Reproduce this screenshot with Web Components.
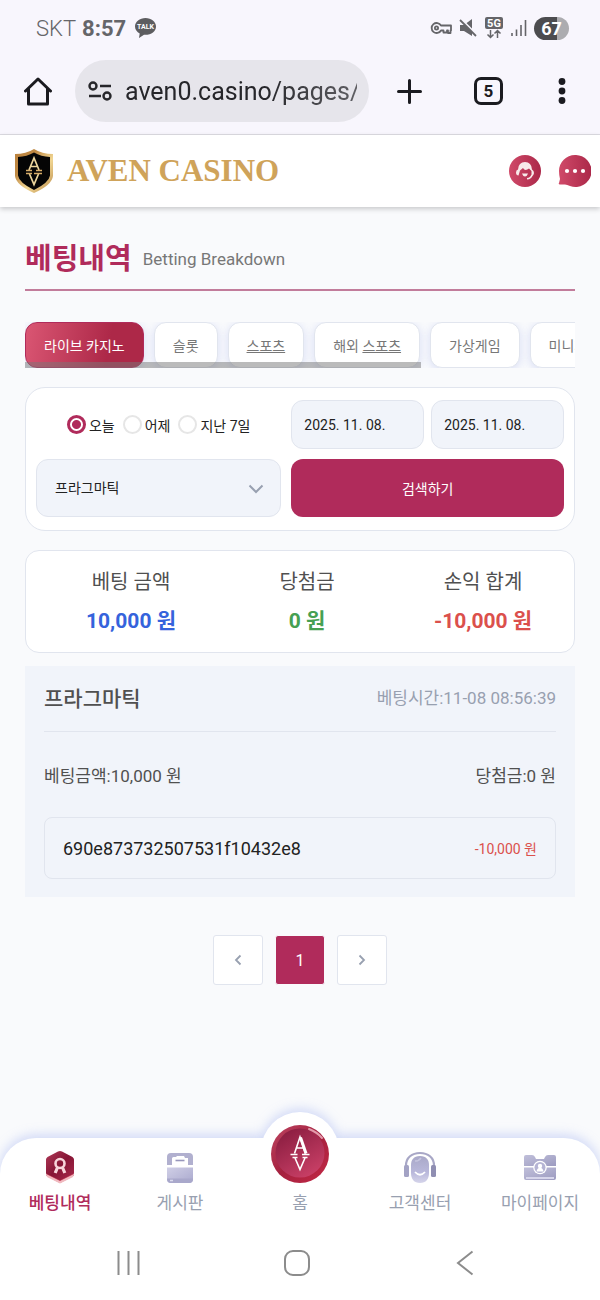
<!DOCTYPE html>
<html lang="ko">
<head>
    <meta charset="UTF-8">
    <meta name="viewport" content="width=device-width, initial-scale=1.0">
    <title>AVEN CASINO</title>
    <style>
        :root {
            --brand: #b02b5b;
            --line: #e1e5ee;
            --field: #f1f4fa;
            --muted: #98a0b0;
            --text: #505050;
        }
        body {
            margin: 0;
            min-height: 100vh;
            display: flex;
            flex-direction: column;
            background: #f9fafc;
            color: var(--text);
            font-family: Roboto, "Noto Sans CJK KR", sans-serif;
        }
        main {
            flex: 1;
            padding: 0 25px;
        }
    </style>
</head>
<body>
    <status-bar></status-bar>
    <browser-bar url="aven0.casino/pages/" tabs="5"></browser-bar>
    <site-header></site-header>

    <main>
        <page-heading heading="베팅내역">Betting Breakdown</page-heading>

        <tab-strip>
            <tab-item active>라이브 카지노</tab-item>
            <tab-item>슬롯</tab-item>
            <tab-item><u>스포츠</u></tab-item>
            <tab-item>해외 <u>스포츠</u></tab-item>
            <tab-item>가상게임</tab-item>
            <tab-item>미니게임</tab-item>
        </tab-strip>

        <bet-filter></bet-filter>

        <summary-card>
            <summary-item label="베팅 금액" color="#3563dc">10,000 원</summary-item>
            <summary-item label="당첨금" color="#46a052">0 원</summary-item>
            <summary-item label="손익 합계" color="#db504c">-10,000 원</summary-item>
        </summary-card>

        <bet-record
            game="프라그마틱"
            time="11-08 08:56:39"
            amount="10,000 원"
            win="0 원"
            code="690e873732507531f10432e8"
            result="-10,000 원"></bet-record>

        <page-numbers></page-numbers>
    </main>

    <bottom-nav>
        <nav-item label="베팅내역" active>
            <svg width="32" height="34" viewBox="0 0 32 34">
                <defs>
                    <linearGradient id="hex" x1="0" y1="0" x2="1" y2="1">
                        <stop offset="0" stop-color="#b03a58"/>
                        <stop offset=".5" stop-color="#861535"/>
                        <stop offset="1" stop-color="#a92a4b"/>
                    </linearGradient>
                </defs>
                <path d="M16 5L29.500 12V26L16 33L2.500 26V12Z" fill="#d04a60"/>
                <path d="M3 27L16 33.500 29 27V24.500L16 31 3 24.500Z" fill="#f0b9bf"/>
                <path d="M16 1Q17 1 18 1.600L28.500 7Q30 8 30 9.500V23.500L16 30.500 2 23.500V9.500Q2 8 3.500 7L14 1.600Q15 1 16 1Z" fill="url(#hex)"/>
                <circle cx="16" cy="13.500" r="4.500" fill="none" stroke="#f7d5da" stroke-width="2.600"/>
                <path d="M13.500 17.500L11.200 23M18.500 17.500L20.800 23" stroke="#f7d5da" stroke-width="3.200"/>
            </svg>
        </nav-item>
        <nav-item label="게시판">
            <svg width="32" height="34" viewBox="0 0 32 34">
                <defs>
                    <linearGradient id="board" x1="0" y1="0" x2="1" y2="1">
                        <stop offset="0" stop-color="#d0cfe6"/>
                        <stop offset="1" stop-color="#aaa9ce"/>
                    </linearGradient>
                </defs>
                <path d="M3 7Q3 3 7 3H25Q29 3 29 7V15H3Z" fill="#b1b0cf"/>
                <path d="M8 15V8.500Q8 7 9.500 7H12L13 6H20L21 8H24V15Z" fill="#fff"/>
                <path d="M11.500 10.500H20.500" stroke="#9796bb" stroke-width="1.600"/>
                <path d="M3 17.500H29V29Q29 33 25 33H7Q3 33 3 29Z" fill="url(#board)"/>
                <path d="M3 28.500V29Q3 33 7 33H25Q29 33 29 29V28.500Z" fill="#a9a8cb"/>
                <path d="M6 30.500H9" stroke="#dcdcee" stroke-width="1.500"/>
            </svg>
        </nav-item>
        <nav-item label="홈" home></nav-item>
        <nav-item label="고객센터">
            <svg width="34" height="34" viewBox="0 0 34 34">
                <defs>
                    <linearGradient id="face" x1="0" y1="0" x2="0" y2="1">
                        <stop offset="0" stop-color="#a9a8c8"/>
                        <stop offset=".6" stop-color="#b9b8db"/>
                        <stop offset="1" stop-color="#d5d4ea"/>
                    </linearGradient>
                </defs>
                <path d="M3 18V15.500C3 7.500 9 3 17 3S31 7.500 31 15.500V18" fill="none" stroke="#a8a7c6" stroke-width="2.200"/>
                <rect x="1" y="15" width="5" height="12" rx="1.500" fill="#a3a2c4"/>
                <rect x="28" y="15" width="5" height="12" rx="1.500" fill="#8f8eb2"/>
                <path d="M17 6C10.500 6 8 10 8 15V23C8 29 11 33 17 33S26 29 26 23V15C26 10 23.500 6 17 6Z" fill="url(#face)"/>
                <path d="M12 11Q16 11 18 8" fill="none" stroke="#c5c4de" stroke-width="1.500"/>
                <path d="M12 22Q17 27.500 22 22" fill="none" stroke="#fff" stroke-width="1.800"/>
            </svg>
        </nav-item>
        <nav-item label="마이페이지">
            <svg width="34" height="34" viewBox="0 0 34 34">
                <defs>
                    <linearGradient id="wallet" x1="0" y1="0" x2="1" y2="1">
                        <stop offset="0" stop-color="#c0bfda"/>
                        <stop offset="1" stop-color="#9c9bc0"/>
                    </linearGradient>
                </defs>
                <path d="M1 7Q1 5 3 5H9Q11 5 12 7L13 9H21L22 7Q23 5 25 5H31Q33 5 33 7V16H1Z" fill="url(#wallet)"/>
                <path d="M1 17.500H33V28Q33 30 31 30H3Q1 30 1 28Z" fill="url(#wallet)"/>
                <path d="M3 28H31" stroke="#d7d6eb" stroke-width="2"/>
                <circle cx="17" cy="17.500" r="6.800" fill="#fff"/>
                <circle cx="17" cy="17.500" r="5.500" fill="#b5b4d4"/>
                <path d="M13.500 21.500Q14 18 17 17.500Q20 18 20.500 21.500Z" fill="#fff"/>
                <circle cx="17" cy="16" r="2.200" fill="#fff"/>
            </svg>
        </nav-item>
    </bottom-nav>
    <system-nav></system-nav>

    <script>
        class StatusBar extends HTMLElement {
            constructor() {
                super();
                const shadow = this.attachShadow({ mode: 'open' });
                shadow.innerHTML = `
                    <style>
                        :host {
                            display: flex;
                            align-items: center;
                            justify-content: space-between;
                            height: 56px;
                            padding: 0 31px 0 36px;
                            background: #f8f6fd;
                            color: #656569;
                            font-size: 22px;
                        }
                        div { display: flex; align-items: center; gap: 6px; }
                        .icons { gap: 7px; }
                        .carrier { font-weight: 300; }
                        .clock { font-weight: 700; }
                        .clock + svg { margin-left: 3px; }
                        .battery {
                            width: 35px;
                            line-height: 23px;
                            border-radius: 12px;
                            background: linear-gradient(90deg, #4c4c4f 66%, #acacb0 66%);
                            color: #fff;
                            font-size: 18px;
                            font-weight: 700;
                            text-align: center;
                        }
                    </style>
                    <div>
                        <span class="carrier">SKT</span>
                        <span class="clock">8:57</span>
                        <svg width="21" height="20" viewBox="0 0 21 20">
                            <path d="M10.500 0C4.700 0 0 3.800 0 8.500c0 3 2 5.600 4.700 7.100L4 20l5-3.200c7 .5 12-3.300 12-8.300C21 3.800 16.300 0 10.500 0z" fill="#5d5d60"/>
                            <text x="10.500" y="11" fill="#fff" font-size="7" font-weight="700" text-anchor="middle">TALK</text>
                        </svg>
                    </div>
                    <div class="icons">
                        <svg width="22" height="14" viewBox="0 0 22 14" fill="none" stroke="#656569" stroke-width="1.800">
                            <path d="M11 4.500A5 5 0 1 0 11 9.500H13.500V11.500H17V9.500H18V12H20.500V9.500H21V4.500Z" stroke-linejoin="round"/>
                            <circle cx="6.500" cy="7" r="1.600"/>
                        </svg>
                        <svg width="18" height="18" viewBox="0 0 18 18">
                            <path d="M1 6H5L13 0V17L5 12H1Z" fill="#656569"/>
                            <path d="M2 0L18 16" stroke="#f8f6fd" stroke-width="2"/>
                            <path d="M1 1L17 17" stroke="#656569" stroke-width="1.800"/>
                        </svg>
                        <svg width="20" height="22" viewBox="0 0 20 22">
                            <rect x="1" y="0" width="18" height="12" rx="2" fill="#656569"/>
                            <text x="10" y="10" fill="#fff" font-size="11" font-weight="700" text-anchor="middle">5G</text>
                            <path d="M6.500 13V20M3.500 17.500L6.500 20.500 9.500 17.500M13.500 21V14M10.500 16.500L13.500 13.500 16.500 16.500" fill="none" stroke="#656569" stroke-width="1.500"/>
                        </svg>
                        <svg width="16" height="16" viewBox="0 0 16 16" stroke="#656569" stroke-width="1.600">
                            <path d="M1 13V16M5.500 9.500V16M10 5V16M14.500 0V16"/>
                        </svg>
                        <span class="battery">67</span>
                    </div>
                `;
            }
        }
        customElements.define('status-bar', StatusBar);

        class BrowserBar extends HTMLElement {
            constructor() {
                super();
                const shadow = this.attachShadow({ mode: 'open' });
                shadow.innerHTML = `
                    <style>
                        :host {
                            display: flex;
                            align-items: center;
                            padding: 4px 34px 12px 24px;
                            background: #f8f6fd;
                            border-bottom: 1px solid #dddce3;
                        }
                        button {
                            display: flex;
                            padding: 0;
                            border: 0;
                            background: none;
                            color: #1b1b20;
                            font: 700 17px Roboto, sans-serif;
                        }
                        .address {
                            flex: 1;
                            min-width: 0;
                            display: flex;
                            align-items: center;
                            gap: 12px;
                            height: 62px;
                            margin: 0 28px 0 23px;
                            padding: 0 12px 0 13px;
                            box-sizing: border-box;
                            border-radius: 31px;
                            background: #e6e5eb;
                        }
                        svg { flex: none; }
                        input {
                            flex: 1;
                            min-width: 0;
                            padding: 0;
                            border: 0;
                            background: none;
                            color: #26262a;
                            font: 25px Roboto, sans-serif;
                            -webkit-mask-image: linear-gradient(90deg, #000 60%, rgba(0, 0, 0, .7));
                        }
                        .tabs {
                            align-items: center;
                            justify-content: center;
                            width: 29px;
                            height: 28px;
                            margin: 0 55px 0 52px;
                            border: 3px solid #1b1b20;
                            border-radius: 7px;
                        }
                    </style>
                    <button aria-label="홈">
                        <svg width="28" height="29" viewBox="0 0 28 29" fill="none" stroke="#1b1b20" stroke-width="3" stroke-linejoin="round" stroke-linecap="round">
                            <path d="M1.500 14L14 2 26.500 14M4.500 11.500V27H23.500V11.500"/>
                        </svg>
                    </button>
                    <div class="address">
                        <svg width="25" height="20" viewBox="0 0 25 20" fill="none" stroke="#26262a" stroke-width="2.400">
                            <circle cx="5" cy="5" r="3.500"/>
                            <path d="M12 5H23M1 15H13"/>
                            <circle cx="19" cy="15" r="3.500"/>
                        </svg>
                        <input type="text" aria-label="주소" value="${this.getAttribute('url')}">
                    </div>
                    <button aria-label="새 탭">
                        <svg width="25" height="25" viewBox="0 0 25 25" stroke="#1b1b20" stroke-width="3" stroke-linecap="round">
                            <path d="M12.500 1.500V23.500M1.500 12.500H23.500"/>
                        </svg>
                    </button>
                    <button class="tabs" aria-label="탭">${this.getAttribute('tabs')}</button>
                    <button aria-label="메뉴">
                        <svg width="8" height="28" viewBox="0 0 8 28" fill="#1b1b20">
                            <circle cx="4" cy="4.500" r="3.400"/>
                            <circle cx="4" cy="14" r="3.400"/>
                            <circle cx="4" cy="23.500" r="3.400"/>
                        </svg>
                    </button>
                `;
            }
        }
        customElements.define('browser-bar', BrowserBar);

        class SiteHeader extends HTMLElement {
            constructor() {
                super();
                const shadow = this.attachShadow({ mode: 'open' });
                shadow.innerHTML = `
                    <style>
                        :host {
                            display: flex;
                            align-items: center;
                            justify-content: space-between;
                            height: 72px;
                            padding: 0 9px 0 14px;
                            background: #fff;
                            box-shadow: 0 2px 5px rgba(0, 0, 0, .2);
                        }
                        .logo {
                            display: flex;
                            align-items: center;
                            gap: 13px;
                            color: #cfa35a;
                            font: 700 31px "Liberation Serif", serif;
                            text-decoration: none;
                            white-space: nowrap;
                        }
                        .actions { display: flex; gap: 17px; }
                        button { display: flex; padding: 0; border: 0; background: none; }
                    </style>
                    <a class="logo" href="#">
                        <svg width="40" height="46" viewBox="0 0 40 46">
                            <defs>
                                <linearGradient id="gold" x1="0" y1="0" x2="1" y2="1">
                                    <stop offset="0" stop-color="#b9803c"/>
                                    <stop offset=".3" stop-color="#c08a44"/>
                                    <stop offset=".6" stop-color="#f1d693"/>
                                    <stop offset="1" stop-color="#b98a48"/>
                                </linearGradient>
                            </defs>
                            <path d="M20 1Q28 6 39 6V28Q38 37 20 45Q2 37 1 28V6Q12 6 20 1Z" fill="url(#gold)"/>
                            <path d="M20 4.500Q27 8.500 36 9V27.500Q35 34.500 20 42Q5 34.500 4 27.500V9Q13 8.500 20 4.500Z" fill="#050505"/>
                            <path d="M15 22L20 10 25 22M17 18.500H23M15.500 26L20 36.500 24.500 26" fill="none" stroke="#ecd59c" stroke-width="1.700"/>
                            <path d="M12 22.500H18M22 22.500H28M12 25.500H18M20 25.500H28" stroke="#d7ac68" stroke-width="1.300"/>
                        </svg>
                        AVEN CASINO
                    </a>
                    <div class="actions">
                        <button aria-label="상담">
                            <svg width="32" height="32" viewBox="0 0 32 32">
                                <defs>
                                    <linearGradient id="red">
                                        <stop offset="0" stop-color="#d04a69"/>
                                        <stop offset="1" stop-color="#ab2849"/>
                                    </linearGradient>
                                </defs>
                                <circle cx="16" cy="16" r="16" fill="url(#red)"/>
                                <path d="M9.500 20.500Q7 20.500 7 17.500Q7 15 9 14.500Q9.500 7 16 7Q22.500 7 23 14.500Q25 15.500 25 18Q24.500 21 22.500 21V16L20 13.500Q16 16.500 14 13L11 15.500Z" fill="#f8eaea"/>
                                <path d="M23 20Q22 23.500 18 23.800" fill="none" stroke="#f8eaea" stroke-width="1.600"/>
                                <path d="M13 18.500H19Q18 21.500 16 21.500T13 18.500Z" fill="#f8eaea"/>
                            </svg>
                        </button>
                        <button aria-label="채팅">
                            <svg width="33" height="32" viewBox="0 0 33 32">
                                <path d="M17 0A16 16 0 1 1 12 31Q9 29.500 7 29.500H2Q0 29.500 1 28L2 24Q1 20 1 16A16 16 0 0 1 17 0Z" fill="url(#red)"/>
                                <circle cx="9" cy="16" r="2.100" fill="#fff"/>
                                <circle cx="17" cy="16" r="2.100" fill="#fff"/>
                                <circle cx="25" cy="16" r="2.100" fill="#fff"/>
                            </svg>
                        </button>
                    </div>
                `;
            }
        }
        customElements.define('site-header', SiteHeader);

        class PageHeading extends HTMLElement {
            constructor() {
                super();
                const shadow = this.attachShadow({ mode: 'open' });
                shadow.innerHTML = `
                    <style>
                        :host {
                            display: flex;
                            align-items: center;
                            gap: 11px;
                            padding: 30px 0 8px;
                            border-bottom: 2px solid #c27c9b;
                            color: #777;
                            font-size: 17px;
                            line-height: 44px;
                        }
                        h1 {
                            margin: 0;
                            color: var(--brand);
                            font-size: 29px;
                            font-weight: 700;
                        }
                    </style>
                    <h1>${this.getAttribute('heading')}</h1>
                    <slot></slot>
                `;
            }
        }
        customElements.define('page-heading', PageHeading);

        class TabStrip extends HTMLElement {
            constructor() {
                super();
                const shadow = this.attachShadow({ mode: 'open' });
                shadow.innerHTML = `
                    <style>
                        :host {
                            display: block;
                            position: relative;
                            margin-top: 31px;
                        }
                        .tabs {
                            display: flex;
                            gap: 10px;
                            overflow-x: auto;
                            scrollbar-width: none;
                        }
                        /* overlay scrollbar */
                        .thumb {
                            position: absolute;
                            left: 0;
                            bottom: 0;
                            width: 72%;
                            height: 6px;
                            background: rgba(120, 120, 120, .5);
                        }
                    </style>
                    <div class="tabs"><slot></slot></div>
                    <div class="thumb"></div>
                `;
            }
        }
        customElements.define('tab-strip', TabStrip);

        class TabItem extends HTMLElement {
            constructor() {
                super();
                const shadow = this.attachShadow({ mode: 'open' });
                shadow.innerHTML = `
                    <style>
                        :host { display: block; flex: none; }
                        button {
                            height: 46px;
                            padding: 0 18px;
                            border: 1px solid var(--line);
                            border-radius: 12px;
                            background: #fff;
                            box-shadow: 0 2px 10px rgba(90, 110, 220, .2);
                            color: #777;
                            font-family: inherit;
                            font-size: 14px;
                            white-space: nowrap;
                        }
                        :host([active]) button {
                            border-color: var(--brand);
                            background: linear-gradient(100deg, #da5673, #ad2848 70%);
                            color: #fff;
                        }
                    </style>
                    <button><slot></slot></button>
                `;
            }
        }
        customElements.define('tab-item', TabItem);

        class BetFilter extends HTMLElement {
            constructor() {
                super();
                const shadow = this.attachShadow({ mode: 'open' });
                shadow.innerHTML = `
                    <style>
                        :host {
                            display: grid;
                            grid-template-columns: 9fr 10fr;
                            grid-template-rows: 49px 58px;
                            gap: 10px;
                            margin-top: 19px;
                            padding: 12px 10px 13px;
                            border: 1px solid var(--line);
                            border-radius: 20px;
                            background: #fff;
                            color: #222;
                            font-size: 14px;
                        }
                        .range {
                            display: flex;
                            align-items: center;
                            justify-content: center;
                            gap: 8px;
                        }
                        label { display: flex; align-items: center; gap: 3px; }
                        input[type="radio"] {
                            appearance: none;
                            width: 19px;
                            height: 19px;
                            margin: 0;
                            border: 2px solid #e6e6e6;
                            border-radius: 50%;
                        }
                        input[type="radio"]:checked {
                            border: 3px solid var(--brand);
                            background: radial-gradient(circle, var(--brand) 4px, #fff 5px);
                        }
                        .dates { display: grid; grid-template-columns: 1fr 1fr; gap: 7px; }
                        input[type="text"], select {
                            width: 100%;
                            height: 100%;
                            box-sizing: border-box;
                            border: 1px solid var(--line);
                            border-radius: 12px;
                            background: var(--field);
                            color: #222;
                            font-family: inherit;
                            font-size: 14px;
                        }
                        input[type="text"] { padding: 0 12px; }
                        select { appearance: none; padding: 0 18px; }
                        .select { position: relative; }
                        .select svg { position: absolute; right: 17px; top: 25px; }
                        button {
                            border: 0;
                            border-radius: 12px;
                            background: var(--brand);
                            color: #fff;
                            font-family: inherit;
                            font-size: 14px;
                        }
                    </style>
                    <div class="range">
                        <label><input type="radio" name="range" checked>오늘</label>
                        <label><input type="radio" name="range">어제</label>
                        <label><input type="radio" name="range">지난 7일</label>
                    </div>
                    <div class="dates">
                        <input type="text" aria-label="시작일" value="2025. 11. 08.">
                        <input type="text" aria-label="종료일" value="2025. 11. 08.">
                    </div>
                    <div class="select">
                        <select aria-label="게임사"><option>프라그마틱</option></select>
                        <svg width="16" height="10" viewBox="0 0 16 10" fill="none" stroke="#98a0b0" stroke-width="2">
                            <path d="M1.500 1.500L8 8 14.500 1.500"/>
                        </svg>
                    </div>
                    <button>검색하기</button>
                `;
            }
        }
        customElements.define('bet-filter', BetFilter);

        class SummaryCard extends HTMLElement {
            constructor() {
                super();
                const shadow = this.attachShadow({ mode: 'open' });
                shadow.innerHTML = `
                    <style>
                        :host {
                            display: grid;
                            grid-template-columns: repeat(3, 1fr);
                            margin-top: 19px;
                            padding: 16px 3px 16px 17px;
                            border: 1px solid var(--line);
                            border-radius: 14px;
                            background: #fff;
                        }
                    </style>
                    <slot></slot>
                `;
            }
        }
        customElements.define('summary-card', SummaryCard);

        class SummaryItem extends HTMLElement {
            constructor() {
                super();
                const shadow = this.attachShadow({ mode: 'open' });
                shadow.innerHTML = `
                    <style>
                        :host {
                            display: flex;
                            flex-direction: column;
                            align-items: center;
                            gap: 9px;
                            line-height: 30px;
                        }
                        .label { font-size: 20px; }
                        .value {
                            color: ${this.getAttribute('color')};
                            font-size: 21px;
                            font-weight: 700;
                        }
                    </style>
                    <span class="label">${this.getAttribute('label')}</span>
                    <span class="value"><slot></slot></span>
                `;
            }
        }
        customElements.define('summary-item', SummaryItem);

        class BetRecord extends HTMLElement {
            constructor() {
                super();
                const shadow = this.attachShadow({ mode: 'open' });
                shadow.innerHTML = `
                    <style>
                        :host {
                            display: block;
                            margin-top: 13px;
                            padding: 0 19px 18px;
                            background: var(--field);
                            font-size: 17px;
                        }
                        header, .row, .result {
                            display: flex;
                            align-items: center;
                            justify-content: space-between;
                        }
                        header {
                            height: 61px;
                            padding-bottom: 4px;
                            border-bottom: 1px solid var(--line);
                        }
                        h2 { margin: 0; font-size: 21px; font-weight: 500; }
                        time { color: var(--muted); }
                        .row { height: 85px; }
                        .result {
                            height: 60px;
                            padding: 0 18px;
                            border: 1px solid var(--line);
                            border-radius: 8px;
                        }
                        .code { color: #222; font-size: 18px; }
                        .amount { color: #db504c; font-size: 14px; }
                    </style>
                    <header>
                        <h2>${this.getAttribute('game')}</h2>
                        <time>베팅시간:${this.getAttribute('time')}</time>
                    </header>
                    <div class="row">
                        <span>베팅금액:${this.getAttribute('amount')}</span>
                        <span>당첨금:${this.getAttribute('win')}</span>
                    </div>
                    <div class="result">
                        <span class="code">${this.getAttribute('code')}</span>
                        <span class="amount">${this.getAttribute('result')}</span>
                    </div>
                `;
            }
        }
        customElements.define('bet-record', BetRecord);

        class PageNumbers extends HTMLElement {
            constructor() {
                super();
                const shadow = this.attachShadow({ mode: 'open' });
                shadow.innerHTML = `
                    <style>
                        :host {
                            display: flex;
                            justify-content: center;
                            gap: 12px;
                            margin-top: 38px;
                        }
                        button {
                            display: flex;
                            align-items: center;
                            justify-content: center;
                            width: 50px;
                            height: 50px;
                            padding: 0;
                            border: 1px solid var(--line);
                            border-radius: 3px;
                            background: #fff;
                            font: 16px Roboto, sans-serif;
                        }
                        .current {
                            border-color: #f9fafc;
                            background: var(--brand);
                            color: #fff;
                        }
                        svg { fill: none; stroke: #98a0b0; stroke-width: 1.800; }
                    </style>
                    <button aria-label="이전"><svg width="8" height="12" viewBox="0 0 8 12"><path d="M6.500 1.500L2 6 6.500 10.500"/></svg></button>
                    <button class="current">1</button>
                    <button aria-label="다음"><svg width="8" height="12" viewBox="0 0 8 12"><path d="M1.500 1.500L6 6 1.500 10.500"/></svg></button>
                `;
            }
        }
        customElements.define('page-numbers', PageNumbers);

        class BottomNav extends HTMLElement {
            constructor() {
                super();
                const shadow = this.attachShadow({ mode: 'open' });
                shadow.innerHTML = `
                    <style>
                        :host { display: block; position: relative; }
                        /* the bar and its bump share one glow */
                        .backdrop {
                            position: absolute;
                            inset: 0;
                            border-radius: 36px 36px 0 0;
                            background: #fff;
                            filter: drop-shadow(0 -3px 6px rgba(110, 135, 235, .3));
                        }
                        .backdrop::before {
                            content: "";
                            position: absolute;
                            left: 50%;
                            top: -26px;
                            width: 78px;
                            height: 78px;
                            margin-left: -39px;
                            border-radius: 50%;
                            background: #fff;
                        }
                        nav {
                            position: relative;
                            display: grid;
                            grid-template-columns: repeat(5, 1fr);
                            height: 88px;
                        }
                    </style>
                    <div class="backdrop"></div>
                    <nav><slot></slot></nav>
                `;
            }
        }
        customElements.define('bottom-nav', BottomNav);

        class NavItem extends HTMLElement {
            constructor() {
                super();
                const shadow = this.attachShadow({ mode: 'open' });
                const coin = `
                    <svg class="coin" width="58" height="60" viewBox="0 0 58 60">
                        <defs>
                            <linearGradient id="rim" x1="0" y1="0" x2="1" y2="1">
                                <stop offset="0" stop-color="#bd4562"/>
                                <stop offset=".5" stop-color="#a5213f"/>
                                <stop offset="1" stop-color="#c42845"/>
                            </linearGradient>
                            <linearGradient id="disc" x1=".2" y1="0" x2=".8" y2="1">
                                <stop offset="0" stop-color="#8a1d40"/>
                                <stop offset="1" stop-color="#cc4168"/>
                            </linearGradient>
                        </defs>
                        <circle cx="29" cy="30" r="29" fill="url(#rim)"/>
                        <circle cx="29" cy="29" r="24.500" fill="url(#disc)"/>
                        <path d="M38 5Q46 8 51 14" fill="none" stroke="#e39aab" stroke-width="2" stroke-linecap="round"/>
                        <path d="M23.500 29.500L29 13 34.500 29.500M25 24H33M24 34L29 45.500 34 34" fill="none" stroke="#fff" stroke-width="1.600"/>
                        <path d="M29.500 13.500L35 29.500" stroke="#fff" stroke-width="3"/>
                        <path d="M19.500 30.500H26.500M31 30.500H38.500M21.500 33.500H26.500M31.500 33.500H36.500" stroke="#fff" stroke-width="1.500"/>
                    </svg>`;
                shadow.innerHTML = `
                    <style>
                        :host { display: block; }
                        a {
                            position: relative;
                            display: flex;
                            flex-direction: column;
                            align-items: center;
                            padding-top: 12px;
                            color: var(--muted);
                            font-size: 17px;
                            text-decoration: none;
                        }
                        .icon { display: flex; height: 34px; }
                        .label { line-height: 38px; white-space: nowrap; }
                        :host([active]) a { color: var(--brand); font-weight: 500; }
                        .coin {
                            position: absolute;
                            top: -14px;
                            left: 50%;
                            margin-left: -29px;
                        }
                    </style>
                    <a href="#">
                        <span class="icon">${this.hasAttribute('home') ? coin : '<slot></slot>'}</span>
                        <span class="label">${this.getAttribute('label')}</span>
                    </a>
                `;
            }
        }
        customElements.define('nav-item', NavItem);

        class SystemNav extends HTMLElement {
            constructor() {
                super();
                const shadow = this.attachShadow({ mode: 'open' });
                shadow.innerHTML = `
                    <style>
                        :host {
                            display: grid;
                            grid-template-columns: repeat(3, 1fr);
                            place-items: center;
                            height: 74px;
                            padding: 0 51px 0 45px;
                            position: relative;
                            background: #fff;
                        }
                        button { display: flex; padding: 0; border: 0; background: none; }
                        svg { fill: none; stroke: #8c8c8c; stroke-width: 2; }
                    </style>
                    <button aria-label="최근 앱"><svg width="26" height="26" viewBox="0 0 26 26"><path d="M2.500 1V25M12.500 1V25M22.500 1V25"/></svg></button>
                    <button aria-label="홈"><svg width="26" height="26" viewBox="0 0 26 26"><rect x="1" y="1" width="24" height="24" rx="8"/></svg></button>
                    <button aria-label="뒤로"><svg width="18" height="26" viewBox="0 0 18 26"><path d="M16.500 1.500L2 13 16.500 24.500"/></svg></button>
                `;
            }
        }
        customElements.define('system-nav', SystemNav);
    </script>
</body>
</html>
